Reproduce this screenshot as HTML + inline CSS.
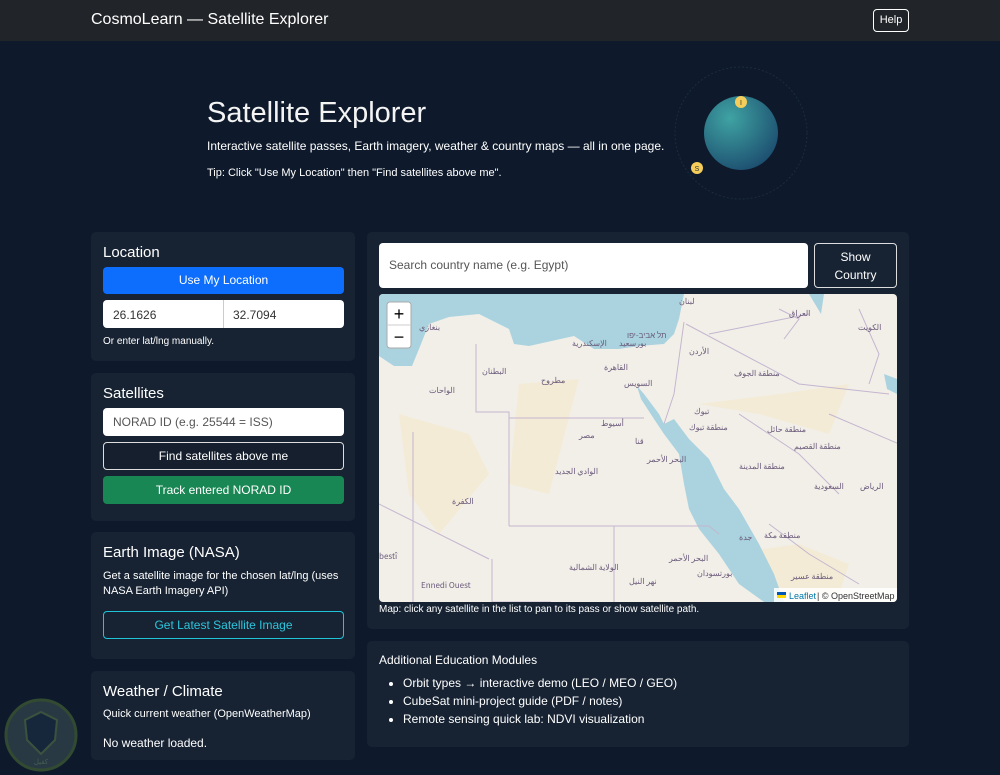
<!DOCTYPE html>
<html><head><meta charset="utf-8"><style>
*{box-sizing:border-box;margin:0;padding:0}
body{width:1000px;height:775px;overflow:hidden;background:#0e1a2b;font-family:"Liberation Sans","Noto Sans CJK SC",sans-serif;color:#fff;position:relative}
.nav{position:absolute;left:0;top:0;width:1000px;height:41px;background:#212529}
.nav .b{position:absolute;left:91px;top:11px;font-size:16px}
.help{position:absolute;left:873px;top:9px;width:36px;height:23px;border:1px solid #fff;border-radius:4px;font-size:11px;text-align:center;line-height:21px}
.abs{position:absolute}
.card{position:absolute;background:#172333;border-radius:5px}
h3{position:absolute;font-size:15px;font-weight:normal}
.btn{position:absolute;border-radius:4px;font-size:12px;text-align:center}
.inp{position:absolute;background:#fff;border-radius:4px;color:#333;font-size:12px}
.small{position:absolute;font-size:11px}
</style></head><body>
<div class="nav"><div class="b">CosmoLearn — Satellite Explorer</div><div class="help">Help</div></div>
<div class="abs" style="left:207px;top:97px;font-size:29px;font-weight:300;color:#f4f4f4">Satellite Explorer</div>
<div class="abs" style="left:207px;top:139px;font-size:12px">Interactive satellite passes, Earth imagery, weather &amp; country maps — all in one page.</div>
<div class="abs" style="left:207px;top:167px;font-size:11px">Tip: Click "Use My Location" then "Find satellites above me".</div>
<svg class="abs" style="left:660px;top:60px" width="160" height="160">
<defs><radialGradient id="g" cx="0.35" cy="0.3" r="0.75"><stop offset="0" stop-color="#3fa3a3"/><stop offset="1" stop-color="#1d4f70"/></radialGradient></defs>
<circle cx="81" cy="73" r="66" fill="none" stroke="#1c2b40" stroke-dasharray="2 2"/>
<circle cx="81" cy="73" r="37" fill="url(#g)"/>
<circle cx="81" cy="42" r="6" fill="#f5cd5b"/><text x="81" y="45" font-size="7" text-anchor="middle" fill="#333" font-family="Liberation Sans">I</text>
<circle cx="37" cy="108" r="6" fill="#f5cd5b"/><text x="37" y="111" font-size="7" text-anchor="middle" fill="#333" font-family="Liberation Sans">S</text>
</svg>

<div class="card" style="left:91px;top:232px;width:264px;height:129px">
<h3 style="left:12px;top:12px">Location</h3>
<div class="btn" style="left:12px;top:35px;width:241px;height:27px;background:#0d6efd;line-height:27px">Use My Location</div>
<div class="inp" style="left:12px;top:68px;width:241px;height:28px"><span class="abs" style="left:10px;top:8px">26.1626</span><div class="abs" style="left:120px;top:0;width:1px;height:28px;background:#ccc"></div><span class="abs" style="left:130px;top:8px">32.7094</span></div>
<div class="small" style="left:12px;top:104px;font-size:10px">Or enter lat/lng manually.</div>
</div>

<div class="card" style="left:91px;top:373px;width:264px;height:148px">
<h3 style="left:12px;top:12px">Satellites</h3>
<div class="inp" style="left:12px;top:35px;width:241px;height:28px;line-height:28px;padding-left:10px;color:#555">NORAD ID (e.g. 25544 = ISS)</div>
<div class="btn" style="left:12px;top:69px;width:241px;height:28px;border:1px solid #ddd;line-height:26px;background:#151f2d">Find satellites above me</div>
<div class="btn" style="left:12px;top:103px;width:241px;height:28px;background:#198754;line-height:28px">Track entered NORAD ID</div>
</div>

<div class="card" style="left:91px;top:532px;width:264px;height:127px">
<h3 style="left:12px;top:12px">Earth Image (NASA)</h3>
<div class="small" style="left:12px;top:37px;width:245px;line-height:15px">Get a satellite image for the chosen lat/lng (uses NASA Earth Imagery API)</div>
<div class="btn" style="left:12px;top:79px;width:241px;height:28px;border:1px solid #20c4d8;color:#2cc6dc;line-height:26px">Get Latest Satellite Image</div>
</div>

<div class="card" style="left:91px;top:671px;width:264px;height:89px">
<h3 style="left:12px;top:12px">Weather / Climate</h3>
<div class="small" style="left:12px;top:37px">Quick current weather (OpenWeatherMap)</div>
<div class="abs" style="left:12px;top:65px;font-size:12px">No weather loaded.</div>
</div>

<div class="card" style="left:367px;top:232px;width:542px;height:397px">
<div class="inp" style="left:12px;top:11px;width:429px;height:45px;line-height:45px;padding-left:10px;color:#555">Search country name (e.g. Egypt)</div>
<div class="btn" style="left:447px;top:11px;width:83px;height:45px;border:1px solid #ddd;line-height:18px;padding-top:4px">Show<br>Country</div>
<svg class="abs" style="left:12px;top:62px;border-radius:4px" width="518" height="308" viewBox="0 0 518 308">
<rect width="518" height="308" fill="#f2efe9"/>
<path d="M140 90 L200 85 L170 200 L130 190Z M20 120 L90 140 L110 180 L60 240 L30 200Z M320 110 L380 120 L450 140 L470 90 L400 100Z M350 260 L420 250 L470 270 L460 300 L400 300Z" fill="#f4e6bf" opacity="0.45"/>
<path d="M0 0 L305 0 L300 25 L295 40 L285 50 L260 52 L240 55 L215 55 L195 42 L150 52 L135 50 L130 35 L100 20 L70 23 L50 30 L40 55 L33 72 L15 72 L0 62Z" fill="#aad3df"/>
<path d="M258 92 L265 100 L280 120 L285 130 L295 125 L310 145 L330 165 L345 195 L360 215 L380 250 L395 280 L405 308 L385 308 L360 290 L340 260 L320 235 L310 215 L305 190 L300 160 L285 140 L275 125 L262 105Z" fill="#aad3df"/>
<path d="M430 0 L445 0 L442 20 L436 10Z M505 80 L518 85 L518 100 L508 95Z" fill="#aad3df"/>
<g fill="none" stroke="#c4b6cf" stroke-width="1">
<path d="M97 50 L97 118 L130 118 L130 232 M130 124 L265 124 M130 232 L330 232 L340 240 M0 210 L110 265 M34 138 L34 308 M113 265 L113 308 L172 308 M235 232 L235 308 M305 28 L295 100 L285 130 M307 30 L420 90 L510 100 M400 15 L420 25 L405 45 M330 40 L430 20"/>
<path d="M480 15 L500 60 L490 90 M450 120 L520 150 M360 120 L420 160 L460 200 M390 230 L430 260 L480 290"/>
</g>
<g font-size="8" fill="#6a5a7a" font-family="Noto Sans CJK SC,sans-serif">
<text x="40" y="36">بنغازي</text><text x="193" y="52">الإسكندرية</text><text x="240" y="52">بورسعيد</text><text x="225" y="76">القاهرة</text><text x="245" y="92">السويس</text>
<text x="50" y="99">الواحات</text><text x="103" y="80">البطنان</text><text x="162" y="89">مطروح</text><text x="222" y="132">أسيوط</text><text x="200" y="144">مصر</text>
<text x="256" y="150">قنا</text><text x="268" y="168">البحر الأحمر</text><text x="176" y="180">الوادي الجديد</text><text x="73" y="210">الكفرة</text>
<text x="315" y="120">تبوك</text><text x="310" y="136">منطقة تبوك</text><text x="388" y="138">منطقة حائل</text><text x="415" y="155">منطقة القصيم</text>
<text x="360" y="175">منطقة المدينة</text><text x="435" y="195">السعودية</text><text x="481" y="195">الرياض</text><text x="355" y="82">منطقة الجوف</text>
<text x="410" y="22">العراق</text><text x="479" y="36">الكويت</text><text x="248" y="44">תל אביב-יפו</text><text x="310" y="60">الأردن</text><text x="300" y="10">لبنان</text>
<text x="190" y="276">الولاية الشمالية</text><text x="290" y="267">البحر الأحمر</text><text x="318" y="282">بورتسودان</text><text x="360" y="246">جدة</text><text x="385" y="244">منطقة مكة</text>
<text x="412" y="285">منطقة عسير</text><text x="250" y="290">نهر النيل</text><text x="42" y="294">Ennedi Ouest</text><text x="0" y="265">bestî</text>
</g>
<rect x="8" y="8" width="24" height="46" rx="3" fill="#fff" stroke="#aaa"/><line x1="8" y1="31" x2="32" y2="31" stroke="#ccc"/>
<text x="20" y="26" font-size="18" text-anchor="middle" fill="#000" font-family="Liberation Sans">+</text>
<text x="20" y="49" font-size="18" text-anchor="middle" fill="#000" font-family="Liberation Sans">−</text>
<rect x="395" y="294" width="123" height="14" fill="#fff" opacity="0.85"/>
<rect x="398" y="298" width="9" height="3" fill="#0057b7"/><rect x="398" y="301" width="9" height="3" fill="#ffd700"/>
<text x="410" y="305" font-size="9" fill="#0078a8" font-family="Liberation Sans">Leaflet</text><text x="438" y="305" font-size="9" fill="#333" font-family="Liberation Sans">| © OpenStreetMap</text>
</svg>
<div class="small" style="left:12px;top:372px;font-size:10px">Map: click any satellite in the list to pan to its pass or show satellite path.</div>
</div>

<div class="card" style="left:367px;top:641px;width:542px;height:106px">
<div class="abs" style="left:12px;top:12px;font-size:12px">Additional Education Modules</div>
<ul class="abs" style="left:36px;top:33px;font-size:12px;line-height:18px">
<li>Orbit types → interactive demo (LEO / MEO / GEO)</li>
<li>CubeSat mini-project guide (PDF / notes)</li>
<li>Remote sensing quick lab: NDVI visualization</li></ul>
</div>

<svg class="abs" style="left:3px;top:698px" width="76" height="74" opacity="0.6">
<circle cx="38" cy="37" r="35" fill="#3b4f55" stroke="#4b6a35" stroke-width="3"/>
<path d="M22 22 L38 14 L54 22 L52 42 L38 56 L24 42Z" fill="#1c3148" stroke="#5a7a4a" stroke-width="2"/>
<text x="38" y="66" font-size="7" text-anchor="middle" fill="#6a8a6a">كفيل</text>
</svg>
</body></html>
